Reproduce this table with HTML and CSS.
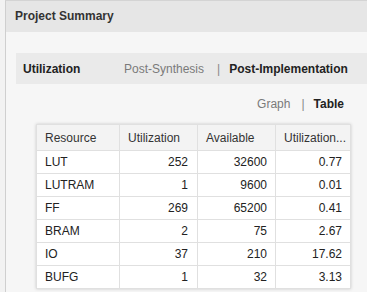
FILE: index.html
```html
<!DOCTYPE html>
<html>
<head>
<meta charset="utf-8">
<link rel="stylesheet" href="styles.css">
</head>
<body>
<div class="panel">
  <div class="panel-head">Project Summary</div>
  <div class="panel-body">
    <div class="util-bar">
      <span class="util-label">Utilization</span>
      <span class="tab muted">Post-Synthesis</span>
      <span class="sep">|</span>
      <span class="tab active">Post-Implementation</span>
    </div>
    <div class="view-row">
      <span class="tab muted">Graph</span>
      <span class="sep">|</span>
      <span class="tab active">Table</span>
    </div>
    <div class="table-wrap">
      <table class="res">
        <thead>
          <tr><th>Resource</th><th>Utilization</th><th>Available</th><th>Utilization...</th></tr>
        </thead>
        <tbody>
          <tr><td>LUT</td><td class="num">252</td><td class="num">32600</td><td class="num">0.77</td></tr>
          <tr><td>LUTRAM</td><td class="num">1</td><td class="num">9600</td><td class="num">0.01</td></tr>
          <tr><td>FF</td><td class="num">269</td><td class="num">65200</td><td class="num">0.41</td></tr>
          <tr><td>BRAM</td><td class="num">2</td><td class="num">75</td><td class="num">2.67</td></tr>
          <tr><td>IO</td><td class="num">37</td><td class="num">210</td><td class="num">17.62</td></tr>
          <tr><td>BUFG</td><td class="num">1</td><td class="num">32</td><td class="num">3.13</td></tr>
        </tbody>
      </table>
    </div>
  </div>
</div>
</body>
</html>
```
FILE: styles.css
```css
html, body {
  margin: 0;
  padding: 0;
  background: #f2f2f2;
  font-family: "Liberation Sans", Arial, sans-serif;
  font-size: 12px;
  color: #222;
}
.panel {
  margin-left: 5px;
  border-left: 1px solid #cfcfcf;
  border-top: 1px solid #d4d4d4;
  height: 291px;
  background: #f6f6f6;
  overflow: hidden;
}
.panel-head {
  height: 31px;
  line-height: 31px;
  background: #e6e6e6;
  padding-left: 9px;
  font-weight: bold;
  color: #333;
}
.panel-body {
  padding: 21px 0 0 10px;
}
.util-bar {
  height: 31px;
  background: #eaeaea;
  display: flex;
  align-items: center;
}
.util-label {
  font-weight: bold;
  color: #222;
  padding-left: 7px;
  width: 101px;
}
.tab.muted { color: #7a7a7a; }
.tab.active { font-weight: bold; color: #222; }
.sep {
  color: #888;
  margin: 0 9px 0 13px;
}
.view-row {
  height: 40px;
  display: flex;
  align-items: center;
  justify-content: flex-end;
  padding-right: 23px;
}
.view-row .sep { margin: 0 9px 0 11px; }
.table-wrap {
  margin-left: 20px;
  width: 315px;
  box-shadow: 0 0 3px rgba(0,0,0,0.18);
  background: #fff;
}
.res {
  border-collapse: collapse;
  width: 100%;
  table-layout: fixed;
}
.res th, .res td {
  border: 1px solid #e0e0e0;
  height: 22px;
  padding: 0 8px;
  white-space: nowrap;
  overflow: hidden;
  color: #222;
}
.res th {
  background: #f3f3f3;
  font-weight: normal;
  text-align: left;
  height: 25px;
  color: #333;
}
.res th:nth-child(1), .res td:nth-child(1) { width: 66px; }
.res th:nth-child(2), .res td:nth-child(2) { width: 61px; }
.res th:nth-child(3), .res td:nth-child(3) { width: 61px; }
.res td.num { text-align: right; }
.res td.num:nth-child(2) { padding-right: 9px; }
```
